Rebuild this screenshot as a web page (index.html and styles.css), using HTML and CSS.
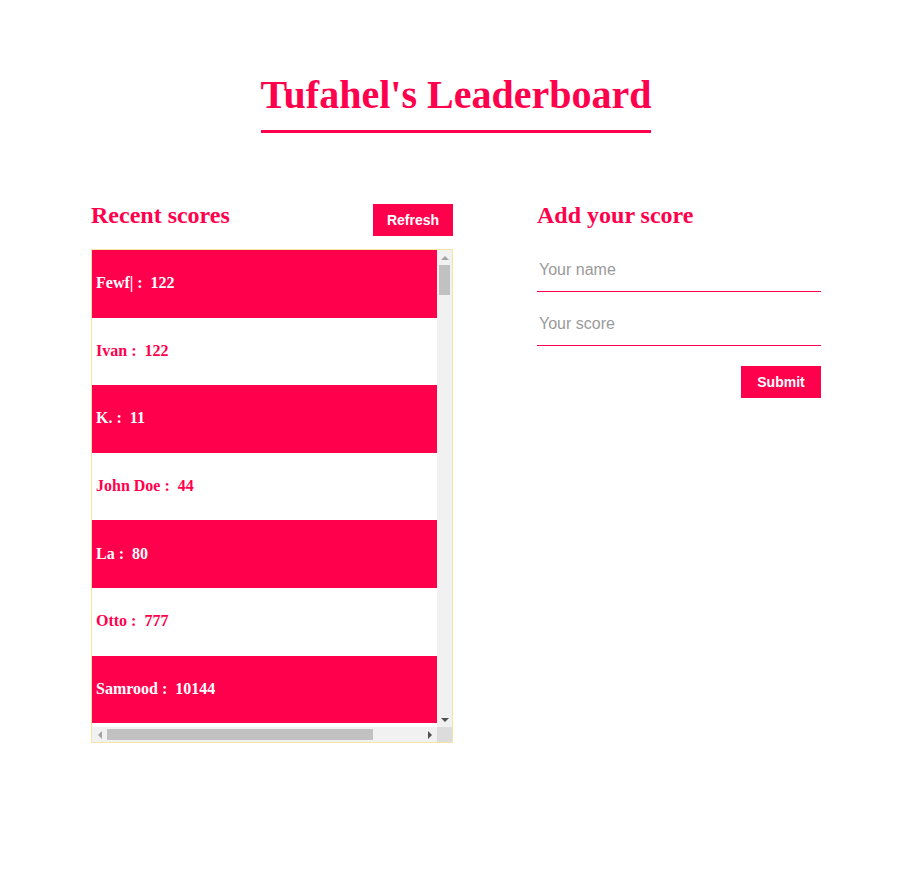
FILE: index.html
```html
<!DOCTYPE html>
<html>
<head>
<meta charset="utf-8">
<title>Leaderboard</title>
<link rel="stylesheet" href="styles.css">
</head>
<body>
<header class="header">
  <h1 class="title">Tufahel's Leaderboard</h1>
</header>
<main class="main">
  <section class="scores">
    <div class="scores-head">
      <h2 class="heading">Recent scores</h2>
      <button class="btn" type="button">Refresh</button>
    </div>
    <div class="list-box">
      <div class="viewport">
        <ul class="list">
          <li class="row">Fewf| :&nbsp; 122</li>
          <li class="row">Ivan :&nbsp; 122</li>
          <li class="row">K. :&nbsp; 11</li>
          <li class="row">John Doe :&nbsp; 44</li>
          <li class="row">La :&nbsp; 80</li>
          <li class="row">Otto :&nbsp; 777</li>
          <li class="row">Samrood :&nbsp; 10144</li>
        </ul>
      </div>
      <div class="vbar">
        <span class="sb-btn"><i class="arr arr-up"></i></span>
        <span class="vtrack"><span class="vthumb"></span></span>
        <span class="sb-btn"><i class="arr arr-down"></i></span>
      </div>
      <div class="hbar">
        <span class="sb-btn"><i class="arr arr-left"></i></span>
        <span class="htrack"><span class="hthumb"></span></span>
        <span class="sb-btn"><i class="arr arr-right"></i></span>
      </div>
      <div class="corner"></div>
    </div>
  </section>
  <section class="add">
    <h2 class="heading">Add your score</h2>
    <form class="form">
      <input class="field" type="text" placeholder="Your name">
      <input class="field" type="text" placeholder="Your score">
      <div class="form-actions">
        <button class="btn" type="button">Submit</button>
      </div>
    </form>
  </section>
</main>
</body>
</html>
```
FILE: styles.css
```css
* { box-sizing: border-box; }
html, body { margin: 0; padding: 0; background: #fff; }
body { font-family: "Liberation Serif", "Times New Roman", serif; color: #ff004d; }

.header { display: flex; justify-content: center; padding-top: 70px; padding-left: 6px; }
.title {
  margin: 0;
  font-size: 40px;
  font-weight: bold;
  line-height: 50px;
  padding-bottom: 10px;
  border-bottom: 3px solid #ff004d;
  color: #ff004d;
}

.main {
  display: flex;
  gap: 84px;
  padding-left: 91px;
  margin-top: 71px;
}

.scores { width: 362px; }
.scores-head { display: flex; justify-content: space-between; align-items: flex-start; height: 45px; }
.heading { margin: 0; font-size: 24px; font-weight: bold; line-height: 22px; color: #ff004d; }

.btn {
  width: 80px;
  height: 32px;
  border: 0;
  background: #ff004d;
  color: #fff;
  font-family: "Liberation Sans", Arial, sans-serif;
  font-weight: bold;
  font-size: 14px;
  padding: 0;
}

.list-box {
  width: 362px;
  height: 494px;
  border: 1px solid #f6e3a6;
  display: grid;
  grid-template-columns: 345px 15px;
  grid-template-rows: 477px 15px;
}
.viewport { overflow: hidden; background: #fff; }
.list { list-style: none; margin: 0; padding: 0; width: 408px; }
.row {
  height: 67.6px;
  display: flex;
  align-items: center;
  padding-left: 4px;
  padding-bottom: 1px;
  font-weight: bold;
  font-size: 16px;
  color: #ff004d;
  background: #fff;
}
.row:nth-child(odd) { background: #ff004d; color: #fff; }

.vbar { display: flex; flex-direction: column; background: #f1f1f1; }
.hbar { display: flex; background: #f1f1f1; }
.corner { background: #dcdcdc; }
.sb-btn { width: 15px; height: 15px; flex: none; display: flex; align-items: center; justify-content: center; }
.vtrack { flex: 1; padding: 0 2px; }
.vthumb { display: block; height: 30px; background: #c1c1c1; }
.htrack { flex: 1; padding: 2px 0; }
.hthumb { display: block; width: 266px; height: 11px; background: #c1c1c1; }

.arr { display: block; width: 0; height: 0; border-style: solid; }
.arr-up { border-width: 0 4px 4px 4px; border-color: transparent transparent #a3a3a3 transparent; }
.arr-down { border-width: 4px 4px 0 4px; border-color: #505050 transparent transparent transparent; }
.arr-left { border-width: 4px 4px 4px 0; border-color: transparent #a3a3a3 transparent transparent; }
.arr-right { border-width: 4px 0 4px 4px; border-color: transparent transparent transparent #505050; }

.add { width: 284px; }
.form { display: flex; flex-direction: column; margin-top: 22px; }
.field {
  height: 44px;
  border: 0;
  border-bottom: 1px solid #ff004d;
  padding: 0 2px;
  font-family: "Liberation Sans", Arial, sans-serif;
  font-size: 16px;
  margin-bottom: 10px;
  outline: none;
}
.field::placeholder { color: #9a9a9a; }
.form-actions { display: flex; justify-content: flex-end; margin-top: 10px; }
```
